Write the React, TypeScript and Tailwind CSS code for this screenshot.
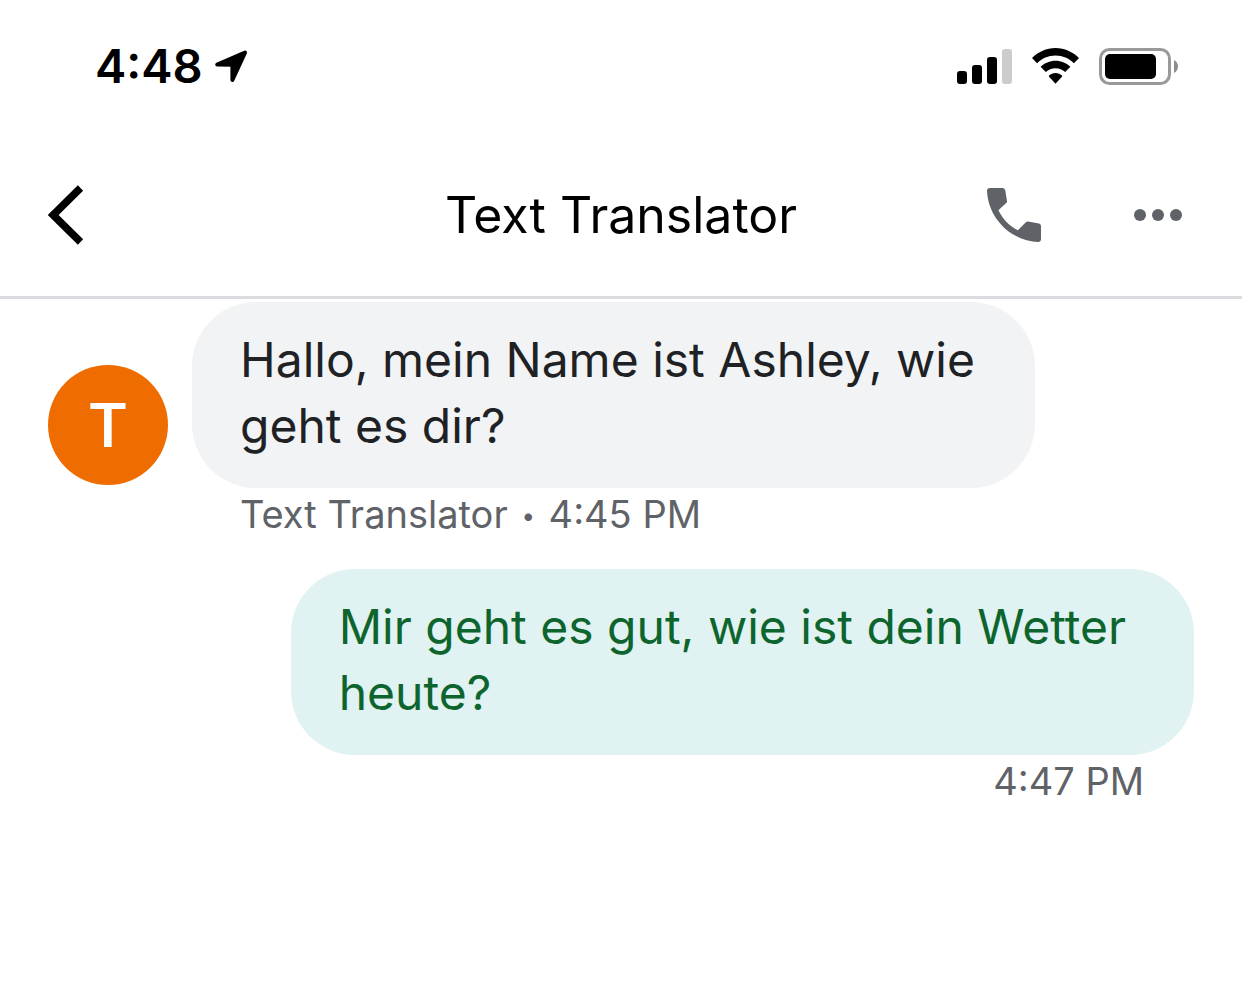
type Message = {
  id: number;
  sender?: string;
  lines: string[];
  time: string;
};

const messages: Message[] = [
  {
    id: 1,
    sender: 'Text Translator',
    lines: ['Hallo, mein Name ist Ashley, wie', 'geht es dir?'],
    time: '4:45 PM',
  },
  {
    id: 2,
    lines: ['Mir geht es gut, wie ist dein Wetter', 'heute?'],
    time: '4:47 PM',
  },
];

function StatusBar() {
  return (
    <div className="flex h-[134px] items-center justify-between pb-[2px] pl-[95px] pr-16 text-black">
      <div className="flex items-center gap-3">
        <span className="text-[47px] font-semibold leading-[58px]">4:48</span>
        <svg width="33" height="34" viewBox="0 0 33 34" aria-hidden="true">
          <path
            d="M2.2 15.6 30 3.6 17.4 31V15.8Z"
            fill="currentColor"
            stroke="currentColor"
            strokeWidth="4"
            strokeLinejoin="round"
          />
        </svg>
      </div>

      <div className="flex items-center gap-5">
        <svg width="55" height="37" viewBox="0 0 55 37" aria-hidden="true">
          <rect x="0" y="23" width="10" height="13" rx="3" />
          <rect x="15" y="17" width="10" height="19" rx="3" />
          <rect x="30" y="9" width="10" height="27" rx="3" />
          <rect x="45" y="1" width="10" height="35" rx="3" fill="#cccccc" />
        </svg>
        <svg width="47" height="37" viewBox="0 0 47 37" aria-hidden="true">
          <path d="M23.5 0C14.5 0 6.2 3.8 0 10.1L5.1 15.2C10 10.4 16.4 7.6 23.5 7.6S37 10.4 41.9 15.2L47 10.1C40.8 3.8 32.5 0 23.5 0Z" />
          <path d="M23.5 12.7C17.7 12.7 12.5 15 8.6 18.8L13.8 24C16.4 21.6 19.8 20.2 23.5 20.2S30.6 21.6 33.2 24L38.4 18.8C34.5 15 29.3 12.7 23.5 12.7Z" />
          <path d="M23.5 25C21 25 18.8 26 17 27.5L16.9 28.6 23.5 35.8 30.1 28.6 30 27.5C28.2 26 26 25 23.5 25Z" />
        </svg>
        <svg width="79" height="37" viewBox="0 0 79 37" aria-hidden="true">
          <rect x="1.5" y="1.5" width="69" height="34" rx="9" fill="none" stroke="#999999" strokeWidth="3" />
          <rect x="6" y="6" width="51" height="25" rx="5" />
          <path d="M75 12C77.6 13.5 79 15.8 79 18.5S77.6 23.5 75 25Z" fill="#8c8c8c" />
        </svg>
      </div>
    </div>
  );
}

function Header() {
  return (
    <header className="grid h-[165px] grid-cols-[1fr_auto_1fr] items-center border-b-[3px] border-[#dadce0] px-12 text-[#5f6368]">
      <button type="button" aria-label="Back" className="justify-self-start text-black">
        <svg width="36" height="60" viewBox="0 0 36 60" aria-hidden="true">
          <path d="M32.5 3 5.2 30 32.5 57" fill="none" stroke="currentColor" strokeWidth="7.5" />
        </svg>
      </button>
      <h1 className="text-[50px] leading-[64px] text-black">Text Translator</h1>
      <div className="flex items-center justify-end gap-[72px]">
        <button type="button" aria-label="Call">
          <svg width="72" height="72" viewBox="0 0 24 24" fill="currentColor" aria-hidden="true">
            <path d="M3.9 3H8.2A.95.95 0 0 1 9.1 3.8L9.68 7.4C9.7 7.6 9.65 7.8 9.5 7.95L6.8 10.4C8.3 13.4 10.4 15.6 13.3 17.1L15.95 14.4C16.15 14.2 16.4 14.1 16.7 14.15L20.3 14.8C20.7 14.9 21 15.2 21 15.7V20.1C21 20.6 20.6 21 20.1 21C10.9 20.6 3.4 13.1 3 3.9C3 3.4 3.4 3 3.9 3Z" />
          </svg>
        </button>
        <button type="button" aria-label="More options" className="px-3">
          <svg width="48" height="12" viewBox="0 0 48 12" fill="currentColor" aria-hidden="true">
            <circle cx="6" cy="6" r="6" />
            <circle cx="24" cy="6" r="6" />
            <circle cx="42" cy="6" r="6" />
          </svg>
        </button>
      </div>
    </header>
  );
}

function Bubble({ lines, className }: { lines: string[]; className: string }) {
  return (
    <p className={`rounded-[64px] pb-[29px] pl-12 pt-[25px] text-[48px] leading-[66px] ${className}`}>
      {lines.map((line) => (
        <span key={line} className="block">
          {line}
        </span>
      ))}
    </p>
  );
}

export default function App() {
  return (
    <div className="min-h-screen bg-white font-['Inter','Liberation_Sans',sans-serif]">
      <StatusBar />
      <Header />

      <main className="flex flex-col gap-[29px] px-12 pt-[3px]">
        {messages.map((message) =>
          message.sender ? (
            <article key={message.id} className="grid grid-cols-[auto_1fr] items-end gap-x-6">
              <div className="mb-[3px] flex size-[120px] items-center justify-center rounded-full bg-[#ef6c00] font-['Roboto',sans-serif] text-[62px] font-medium text-white">
                {message.sender[0]}
              </div>
              <Bubble lines={message.lines} className="justify-self-start bg-[#f1f3f4] pr-[60px] text-[#202124]" />
              <p className="col-start-2 pl-12 text-[38px] leading-[52px] text-[#5f6368]">
                {message.sender} <span className="mx-[3px] align-[4px] text-2xl leading-none">•</span> {message.time}
              </p>
            </article>
          ) : (
            <article key={message.id} className="flex flex-col items-end">
              <Bubble lines={message.lines} className="bg-[#e0f2f1] pr-[68px] text-[#0d652d]" />
              <p className="pr-[50px] text-[38px] leading-[52px] text-[#5f6368]">{message.time}</p>
            </article>
          ),
        )}
      </main>
    </div>
  );
}
